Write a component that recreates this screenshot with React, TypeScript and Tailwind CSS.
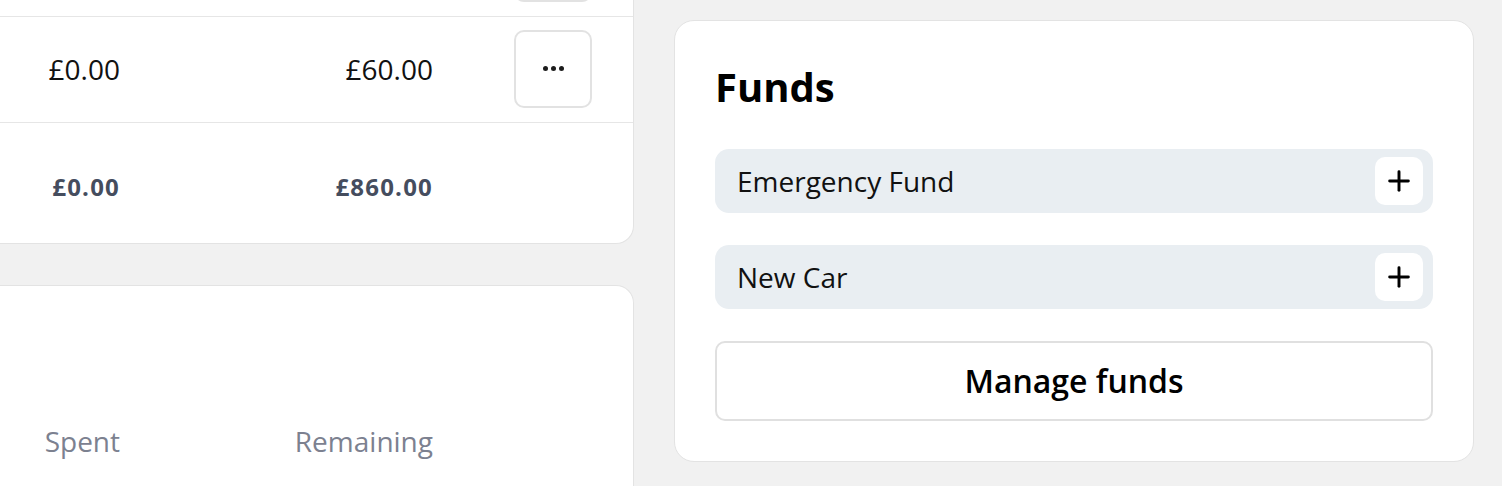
import { Plus } from "lucide-react"

const font = { fontFamily: '"Open Sans", "Noto Sans", sans-serif' }

type Row = { spent: string; remaining: string }

const rows: Row[] = [
  { spent: "£0.00", remaining: "£800.00" },
  { spent: "£0.00", remaining: "£60.00" },
]

const funds = ["Emergency Fund", "New Car"]

function MoreButton() {
  return (
    <button className="flex h-[78px] w-[78px] items-center justify-center gap-[3px] rounded-[10px] border-2 border-[#e2e2e2] bg-white">
      <span className="h-[5px] w-[5px] rounded-full bg-[#1c1c1c]" />
      <span className="h-[5px] w-[5px] rounded-full bg-[#1c1c1c]" />
      <span className="h-[5px] w-[5px] rounded-full bg-[#1c1c1c]" />
    </button>
  )
}

function BudgetTable() {
  return (
    <div className="-mt-[90px] w-[634px] rounded-br-[18px] border border-l-0 border-[#e3e3e3] bg-white">
      {rows.map((row, i) => (
        <div key={i} className="flex h-[106px] items-center border-b border-[#e6e6e6] pb-[2px] text-[28px] text-[#111]">
          <div className="w-[120px] text-right">{row.spent}</div>
          <div className="w-[313px] text-right">{row.remaining}</div>
          <div className="ml-[81px]">
            <MoreButton />
          </div>
        </div>
      ))}
      <div className="flex h-[120px] items-center pt-[8px] text-[24px] font-bold tracking-[0.05em] text-[#454d5e]">
        <div className="w-[120px] text-right">£0.00</div>
        <div className="w-[313px] text-right">£860.00</div>
      </div>
    </div>
  )
}

function SecondTable() {
  return (
    <div className="mt-[41px] h-[300px] w-[634px] rounded-tr-[18px] border border-l-0 border-[#e3e3e3] bg-white pt-[134px]">
      <div className="flex text-[28px] text-[#7c8190]">
        <div className="w-[120px] text-right">Spent</div>
        <div className="w-[313px] text-right">Remaining</div>
      </div>
    </div>
  )
}

function FundsCard() {
  return (
    <div className="mt-[20px] w-[800px] rounded-[20px] border border-[#e3e3e3] bg-white px-[40px] pb-[40px] pt-[40px]">
      <h2 className="text-[40px] leading-[52px] font-bold text-black">Funds</h2>
      <div className="mt-[36px] flex flex-col gap-[32px]">
        {funds.map((name) => (
          <div
            key={name}
            className="flex h-[64px] items-center justify-between rounded-[14px] bg-[#e9eef2] pl-[22px] pr-[10px]"
          >
            <span className="text-[28px] text-[#111]">{name}</span>
            <button className="flex h-[48px] w-[48px] items-center justify-center rounded-[10px] bg-white">
              <Plus className="h-[32px] w-[32px] text-black" strokeWidth={2.2} />
            </button>
          </div>
        ))}
      </div>
      <button className="mt-[32px] flex h-[80px] w-full items-center justify-center rounded-[10px] border-2 border-[#e0e0e0] bg-white text-[32px] font-semibold text-black">
        Manage funds
      </button>
    </div>
  )
}

export default function App() {
  return (
    <div className="h-[486px] w-[1502px] overflow-hidden bg-[#f1f1f1]" style={font}>
      <div className="flex items-start gap-[40px]">
        <div className="flex flex-col">
          <BudgetTable />
          <SecondTable />
        </div>
        <FundsCard />
      </div>
    </div>
  )
}
